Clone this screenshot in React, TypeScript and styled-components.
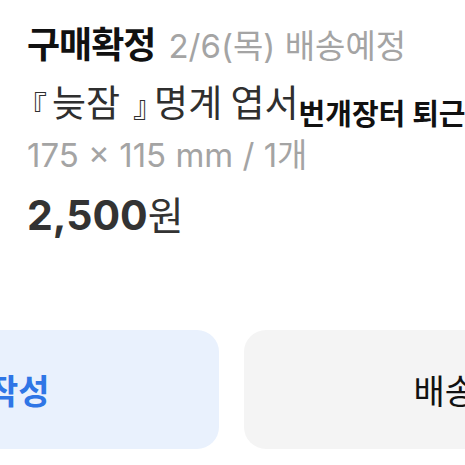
import React from 'react';
import styled, { createGlobalStyle } from 'styled-components';

const GlobalStyle = createGlobalStyle`
  html, body {
    margin: 0;
    padding: 0;
    background: #ffffff;
  }
  body {
    font-family: Inter, "Noto Sans CJK KR", sans-serif;
    -webkit-font-smoothing: antialiased;
  }
`;

const Screen = styled.div`
  width: 465px;
  height: 465px;
  overflow: hidden;
  display: flex;
  flex-direction: column;
`;

const Info = styled.div`
  display: flex;
  flex-direction: column;
  padding: 26px 0 0 27px;
`;

const StatusRow = styled.div`
  display: flex;
  align-items: baseline;
  gap: 13px;
  white-space: nowrap;
  height: 38px;
  line-height: 38px;
`;

const Status = styled.span`
  font-size: 36px;
  font-weight: 700;
  color: #111111;
  letter-spacing: -1px;
`;

const Delivery = styled.span`
  font-size: 33px;
  font-weight: 400;
  color: #a4a4a4;
`;

const TitleRow = styled.div`
  display: flex;
  align-items: baseline;
  white-space: nowrap;
  height: 48px;
  line-height: 48px;
  margin-top: 13px;
`;

const ProductName = styled.span`
  font-family: "Noto Sans CJK KR", sans-serif;
  font-size: 37px;
  color: #2f2f2f;
`;

const Bracket = styled.span<{ $width: number; $pad?: number; $shift?: number; $tight?: number }>`
  display: inline-block;
  width: ${p => p.$width}px;
  margin-left: ${p => p.$shift ?? 0}px;
  padding-left: ${p => p.$pad ?? 0}px;
  letter-spacing: ${p => p.$tight ?? 0}px;
  box-sizing: border-box;
  font-size: 30px;
`;

const ShopName = styled.span`
  font-size: 29px;
  font-weight: 700;
  color: #111111;
  position: relative;
  top: 8px;
`;

const Spec = styled.div`
  font-size: 33px;
  line-height: 40px;
  height: 40px;
  color: #a4a4a4;
  white-space: nowrap;
  margin-top: 10px;
`;

const Price = styled.div`
  margin-top: 17px;
  height: 46px;
  line-height: 46px;
  color: #333333;
  white-space: nowrap;
`;

const Amount = styled.span`
  font-size: 41px;
  font-weight: 700;
`;

const Won = styled.span`
  font-size: 39px;
  font-weight: 400;
`;

const Actions = styled.div`
  display: flex;
  gap: 25px;
  margin: 92px 0 0 -245px;
`;

const ActionButton = styled.button<{ $primary?: boolean }>`
  flex: 0 0 464px;
  height: 119px;
  border: none;
  border-radius: 22px;
  background: ${p => (p.$primary ? '#e9f1fd' : '#f4f4f4')};
  color: ${p => (p.$primary ? '#2f76e6' : '#111111')};
  font-family: Inter, "Noto Sans CJK KR", sans-serif;
  font-size: 34px;
  font-weight: ${p => (p.$primary ? 600 : 400)};
  padding: 0;
`;

export default function App() {
  return (
    <Screen>
      <GlobalStyle />
      <Info>
        <StatusRow>
          <Status>구매확정</Status>
          <Delivery>2/6(목) 배송예정</Delivery>
        </StatusRow>
        <TitleRow>
          <ProductName>
            <Bracket $width={35} $shift={-10}>『</Bracket>늦잠<Bracket $width={34} $pad={13} $tight={-9}>』</Bracket>명계 엽서
          </ProductName>
          <ShopName>번개장터 퇴근길</ShopName>
        </TitleRow>
        <Spec>175 × 115 mm / 1개</Spec>
        <Price>
          <Amount>2,500</Amount>
          <Won>원</Won>
        </Price>
      </Info>
      <Actions>
        <ActionButton $primary>후기작성</ActionButton>
        <ActionButton>배송조회</ActionButton>
      </Actions>
    </Screen>
  );
}
